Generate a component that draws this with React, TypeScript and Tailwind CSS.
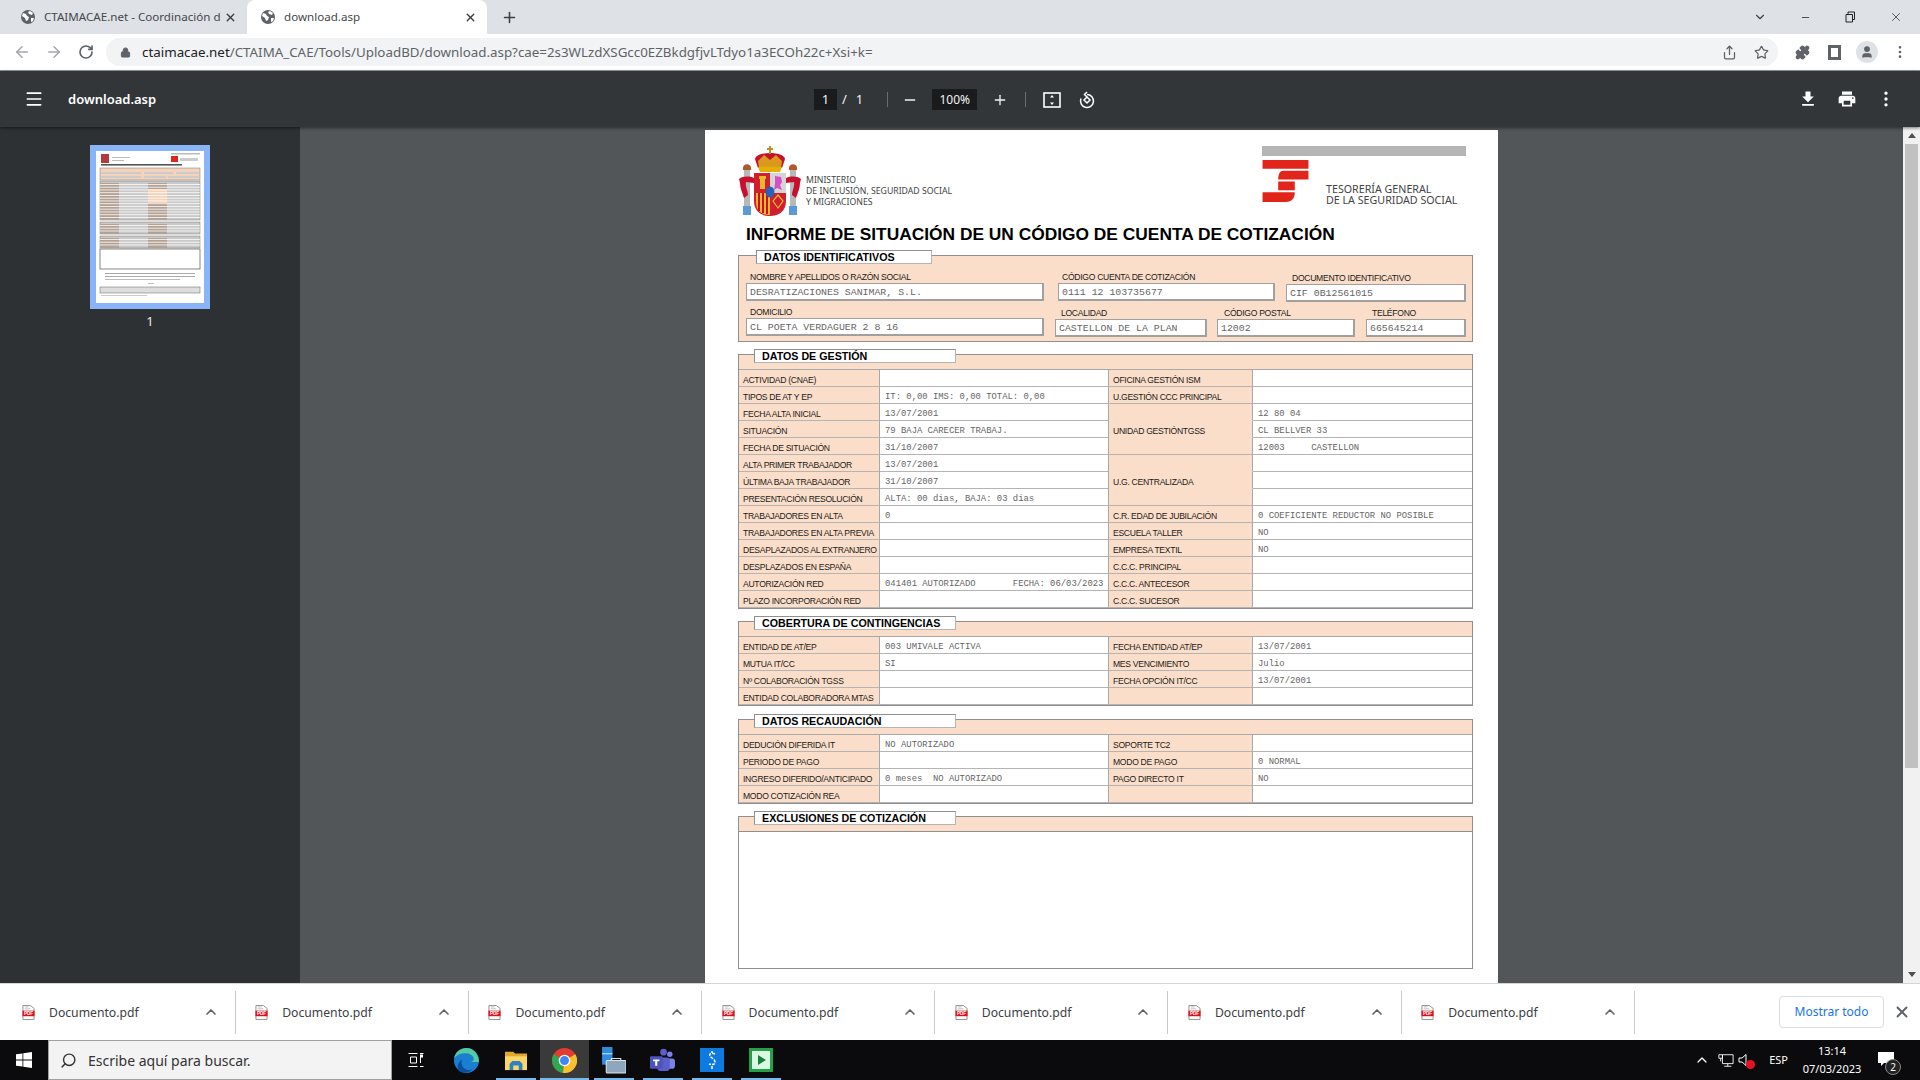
import {
  ArrowLeft,
  ArrowRight,
  ChevronDown,
  ChevronUp,
  Lock,
  Menu,
  Minus,
  MoreVertical,
  Plus,
  Puzzle,
  RotateCw,
  Search,
  Share,
  Star,
  User,
  X,
} from "lucide-react";

const UI_FONT = "font-['Noto_Sans',sans-serif]";

const gestion = [
  ["ACTIVIDAD (CNAE)", "", "OFICINA GESTIÓN ISM", ""],
  ["TIPOS DE AT Y EP", "IT: 0,00 IMS: 0,00 TOTAL: 0,00", "U.GESTIÓN CCC PRINCIPAL", ""],
  ["FECHA ALTA INICIAL", "13/07/2001", "", "12 80 04"],
  ["SITUACIÓN", "79 BAJA CARECER TRABAJ.", "UNIDAD GESTIÓNTGSS", "CL BELLVER 33"],
  ["FECHA DE SITUACIÓN", "31/10/2007", "", "12003     CASTELLON"],
  ["ALTA PRIMER TRABAJADOR", "13/07/2001", "", ""],
  ["ÚLTIMA BAJA TRABAJADOR", "31/10/2007", "U.G. CENTRALIZADA", ""],
  ["PRESENTACIÓN RESOLUCIÓN", "ALTA: 00 dias, BAJA: 03 dias", "", ""],
  ["TRABAJADORES EN ALTA", "0", "C.R. EDAD DE JUBILACIÓN", "0 COEFICIENTE REDUCTOR NO POSIBLE"],
  ["TRABAJADORES EN ALTA PREVIA", "", "ESCUELA TALLER", "NO"],
  ["DESAPLAZADOS AL EXTRANJERO", "", "EMPRESA TEXTIL", "NO"],
  ["DESPLAZADOS EN ESPAÑA", "", "C.C.C. PRINCIPAL", ""],
  ["AUTORIZACIÓN RED", "041401 AUTORIZADO       FECHA: 06/03/2023", "C.C.C. ANTECESOR", ""],
  ["PLAZO INCORPORACIÓN RED", "", "C.C.C. SUCESOR", ""],
];

const cobertura = [
  ["ENTIDAD DE AT/EP", "003 UMIVALE ACTIVA", "FECHA ENTIDAD AT/EP", "13/07/2001"],
  ["MUTUA IT/CC", "SI", "MES VENCIMIENTO", "Julio"],
  ["Nº COLABORACIÓN TGSS", "", "FECHA OPCIÓN IT/CC", "13/07/2001"],
  ["ENTIDAD COLABORADORA MTAS", "", "", ""],
];

const recaudacion = [
  ["DEDUCIÓN DIFERIDA IT", "NO AUTORIZADO", "SOPORTE TC2", ""],
  ["PERIODO DE PAGO", "", "MODO DE PAGO", "0 NORMAL"],
  ["INGRESO DIFERIDO/ANTICIPADO", "0 meses  NO AUTORIZADO", "PAGO DIRECTO IT", "NO"],
  ["MODO COTIZACIÓN REA", "", "", ""],
];

function GlobeIcon() {
  return (
    <svg viewBox="0 0 16 16" className="w-4 h-4 shrink-0">
      <circle cx="8" cy="8" r="7" fill="#5f6368" />
      <path d="M3 4l3 1 1 2 2 1-1 3-2 1-1-3-3-2zM10 2l3 2-1 2-3-1-1-2zM11 9l3 0-1 3-2 1z" fill="#fff" />
    </svg>
  );
}

function Tab({ title, active }: { title: string; active?: boolean }) {
  return (
    <div className={`h-[34px] w-[240px] shrink-0 flex items-center pl-[13px] pr-[10px] ${active ? "bg-white rounded-t-lg" : ""}`}>
      <GlobeIcon />
      <span className="ml-[8px] flex-1 text-[11.6px] text-[#45474a] whitespace-nowrap">{title}</span>
      <X className="w-[13px] h-[13px] text-[#3c4043]" strokeWidth={2.5} />
    </div>
  );
}

function Legend({ title, wide }: { title: string; wide?: boolean }) {
  return (
    <div
      className={`absolute top-[-6px] h-[14px] bg-white border border-[#8f8f8f] border-b-[#b5b5b5] border-r-[#b5b5b5] text-[10.7px] leading-[12px] font-bold text-black ${
        wide ? "left-[15px] w-[202px] pl-[7px]" : "left-[17px] w-[176px] pl-[7px]"
      }`}
    >
      {title}
    </div>
  );
}

function Field({ label, value, className, labelClass }: { label: string; value: string; className: string; labelClass: string }) {
  return (
    <div className={className}>
      <div className={`text-[8.6px] tracking-[-0.3px] leading-[10px] h-[10px] text-[#1a1a1a] ${labelClass}`}>{label}</div>
      <div className="mt-[1px] h-[18px] bg-white border border-[#a0a0a0] border-r-2 border-b-2 pl-[3px] font-['Liberation_Mono',monospace] text-[9.9px] leading-[17px] text-[#666] whitespace-pre">
        {value}
      </div>
    </div>
  );
}

function DataTable({ rows, merged }: { rows: string[][]; merged?: boolean }) {
  const cell = "h-[17px] border-b border-[#b4b4b4] pt-[3px] leading-[14px] whitespace-pre overflow-hidden";
  const label = `${cell} text-[8.6px] tracking-[-0.3px] bg-[#fadec9] pl-[4px] text-[#1a1a1a] border-r border-r-[#a8a8a8]`;
  const value = `${cell} text-[8.9px] bg-white pl-[5px] font-['Liberation_Mono',monospace] text-[#666]`;
  return (
    <div className="grid grid-cols-[141px_229px_144px_1fr] border-t border-[#a8a8a8]">
      {rows.flatMap((r, i) => {
        const noBorder = merged && [2, 3, 5, 6].includes(i);
        return [
          <div key={i + "a"} className={label}>{r[0]}</div>,
          <div key={i + "b"} className={`${value} border-r border-r-[#a8a8a8]`}>{r[1]}</div>,
          <div key={i + "c"} className={`${label} ${noBorder ? "border-b-[#fadec9]" : ""}`}>{r[2]}</div>,
          <div key={i + "d"} className={value}>{r[3]}</div>,
        ];
      })}
    </div>
  );
}

function Section({ title, wide, children, className }: { title: string; wide?: boolean; children: React.ReactNode; className?: string }) {
  return (
    <div className={`relative border border-[#8f8f8f] ${className ?? ""}`}>
      <Legend title={title} wide={wide} />
      <div className="h-[14px] bg-[#fadec9]" />
      {children}
    </div>
  );
}

function CoatOfArms() {
  return (
    <svg viewBox="0 0 64 70" className="w-[64px] h-[70px] shrink-0">
      <rect x="6" y="24" width="6" height="38" fill="#b8b8b8" />
      <rect x="52" y="24" width="6" height="38" fill="#b8b8b8" />
      <path d="M5 22c0-5 8-5 8 0v2H5zM51 22c0-5 8-5 8 0v2h-8z" fill="#b5552a" />
      <rect x="5" y="60" width="8" height="9" fill="#5b9bd5" />
      <rect x="51" y="60" width="8" height="9" fill="#5b9bd5" />
      <path d="M1 33c4-3 10-3 15-1v5l-8-1c-1 4 2 9 2 13l-4 3c-2-6-4-10-4-15z" fill="#c8102e" />
      <path d="M63 33c-4-3-10-3-15-1v5l8-1c1 4-2 9-2 13l4 3c2-6 4-10 4-15z" fill="#c8102e" />
      <path d="M17 13c1-8 29-8 30 0l-3 9H20z" fill="#c8102e" />
      <path d="M20 15l6-6 6 5 6-5 6 6-1 7H21z" fill="#d99a1c" />
      <path d="M20 21h24l-2 5H22z" fill="#e2b007" />
      <rect x="31" y="0" width="2" height="8" fill="#b9931f" />
      <rect x="29" y="2" width="6" height="2" fill="#b9931f" />
      <path d="M16 27h16v43c-9 0-16-5-16-15z" fill="#d21f2f" />
      <path d="M32 27h16v20H32z" fill="#d4d4d4" />
      <path d="M32 47h16v8c0 10-7 15-16 15z" fill="#d21f2f" />
      <path d="M18 47h14v22c-8 0-14-4-14-13z" fill="#e8b92e" />
      <path d="M20 47h2v18h-2zM24 47h2v20h-2zM28 47h2v21h-2z" fill="#c8102e" />
      <path d="M21 30h7v3h-1v10h-5V33h-1z" fill="#e8b92e" />
      <path d="M37 30l6 1 1 5-2 3 2 5-5-2-3 2 1-6z" fill="#d64fc4" />
      <path d="M40 49l5 6-5 7-5-7z" fill="none" stroke="#e8b92e" strokeWidth="1.2" />
      <ellipse cx="32" cy="46" rx="4.5" ry="5.5" fill="#2a62b8" />
    </svg>
  );
}

function TgssLogo() {
  return (
    <svg viewBox="0 0 47 43" className="w-[47px] h-[42px] shrink-0" fill="#e1251b">
      <path d="M0 0h47v9H0z" />
      <path d="M47 11H21c-3 0-5 3-5 9h31z" />
      <path d="M16 22h17v9H16z" />
      <path d="M0 33h33c0 6-3 10-9 10H0z" />
    </svg>
  );
}

function ThumbRows({ y, count }: { y: number; count: number }) {
  return (
    <>
      {Array.from({ length: count }).map((_, r) => (
        <rect key={r} x="4" y={y + r * 2.75} width="100" height="0.9" fill="#fff" opacity="0.85" />
      ))}
    </>
  );
}

function Thumbnail() {
  return (
    <svg viewBox="0 0 108 152" className="block w-[108px] h-[152px] bg-white blur-[0.3px]">
      <rect x="5" y="3" width="8" height="9" fill="#b33a3a" />
      <rect x="16" y="6" width="18" height="1" fill="#bbb" />
      <rect x="16" y="9" width="12" height="1" fill="#bbb" />
      <rect x="75" y="2" width="29" height="1.5" fill="#bbb" />
      <rect x="75" y="5" width="7" height="6" fill="#e1251b" />
      <rect x="84" y="7" width="18" height="3" fill="#ccc" />
      <rect x="5" y="13" width="81" height="1.6" fill="#555" />
      <rect x="4" y="17" width="100" height="12" fill="#f4d3ba" stroke="#777" strokeWidth="0.5" />
      <rect x="5" y="21" width="40" height="2" fill="#ccc" />
      <rect x="48" y="21" width="29" height="2" fill="#ccc" />
      <rect x="80" y="21" width="23" height="2" fill="#ccc" />
      <rect x="5" y="25" width="40" height="2" fill="#ccc" />
      <rect x="48" y="25" width="22" height="2" fill="#ccc" />
      <rect x="72" y="25" width="31" height="2" fill="#ccc" />
      <rect x="4" y="30" width="100" height="39" fill="#c9c9c9" stroke="#777" strokeWidth="0.5" />
      <rect x="4" y="32" width="19" height="37" fill="#b3a294" />
      <rect x="52" y="32" width="19" height="37" fill="#b3a294" />
      <rect x="52" y="38" width="19" height="14" fill="#f4d3ba" />
      <ThumbRows y={33} count={13} />
      <rect x="4" y="71" width="100" height="12" fill="#c9c9c9" stroke="#777" strokeWidth="0.5" />
      <rect x="4" y="73" width="19" height="10" fill="#b3a294" />
      <rect x="52" y="73" width="19" height="10" fill="#b3a294" />
      <ThumbRows y={74} count={3} />
      <rect x="4" y="85" width="100" height="12" fill="#c9c9c9" stroke="#777" strokeWidth="0.5" />
      <rect x="4" y="87" width="19" height="10" fill="#b3a294" />
      <rect x="52" y="87" width="19" height="10" fill="#b3a294" />
      <ThumbRows y={88} count={3} />
      <rect x="4" y="98" width="100" height="20" fill="#fff" stroke="#666" strokeWidth="0.8" />
      <rect x="9" y="122" width="90" height="1" fill="#aaa" />
      <rect x="9" y="125" width="90" height="1" fill="#aaa" />
      <rect x="9" y="128" width="75" height="1" fill="#bbb" />
      <rect x="52" y="132" width="6" height="0.8" fill="#aaa" />
      <rect x="4" y="136" width="100" height="6" fill="#ddd" stroke="#666" strokeWidth="0.5" />
      <rect x="5" y="144" width="46" height="1" fill="#ccc" />
    </svg>
  );
}

function PdfIcon() {
  return (
    <svg viewBox="0 0 14 16" className="w-[13px] h-[15px] shrink-0">
      <path d="M1 .5h8l4 3v12H1z" fill="#fff" stroke="#8a8a8a" />
      <rect x="0.5" y="6" width="13" height="6" fill="#e0101a" />
      <path d="M3 2h4M3 4h6" stroke="#aaa" strokeWidth="0.8" />
      <text x="7" y="11" textAnchor="middle" fontSize="5" fontWeight="700" fill="#fff" fontFamily="Liberation Sans, sans-serif">PDF</text>
    </svg>
  );
}

function DownloadItem() {
  return (
    <div className="w-[233.2px] h-[43px] shrink-0 flex items-center pl-[19.5px] pr-[16px] border-r border-[#c9c9c9]">
      <PdfIcon />
      <span className="ml-[14px] pt-[2px] flex-1 text-[12.2px] text-[#3c4043]">Documento.pdf</span>
      <ChevronUp className="w-[16px] h-[16px] text-[#5f6368]" strokeWidth={2.5} />
    </div>
  );
}

function TaskIcon({ children, active, open = true }: { children: React.ReactNode; active?: boolean; open?: boolean }) {
  return (
    <div className={`w-[49px] h-[40px] flex items-center justify-center relative ${active ? "bg-[#3a3a3a]" : ""}`}>
      {children}
      {open && <div className={`absolute bottom-0 h-[2px] bg-[#76b9ed] ${active ? "left-0 right-0" : "left-[5px] right-[4px]"}`} />}
    </div>
  );
}

export default function App() {
  return (
    <div className={`w-[1920px] h-[1080px] overflow-hidden flex flex-col ${UI_FONT}`}>
      {/* tabs */}
      <div className="h-[34px] bg-[#dee1e6] flex items-center pl-[7px] shrink-0">
        <Tab title="CTAIMACAE.net - Coordinación d" />
        <Tab title="download.asp" active />
        <Plus className="ml-[14px] w-[17px] h-[17px] text-[#3c4043]" strokeWidth={2.2} />
        <div className="ml-auto flex items-center gap-[33px] pr-[17px] text-[#3c4043]">
          <ChevronDown className="w-[14px] h-[14px]" />
          <Minus className="w-[11px] h-[11px]" />
          <svg viewBox="0 0 12 12" className="w-[12px] h-[12px]" fill="none" stroke="#222" strokeWidth="1">
            <path d="M2 3.5h6.5V11H2zM4 3.5V1h6.5v7.5H8.5" />
          </svg>
          <X className="w-[14px] h-[14px]" strokeWidth={1.4} />
        </div>
      </div>
      {/* omnibox */}
      <div className="h-[37px] bg-white flex items-center shrink-0 border-b border-[#9a9a9a]">
        <ArrowLeft className="ml-[13px] w-[18px] h-[18px] text-[#a4a7ab]" />
        <ArrowRight className="ml-[14px] w-[18px] h-[18px] text-[#a4a7ab]" />
        <RotateCw className="ml-[15px] w-[16px] h-[16px] text-[#5f6368]" strokeWidth={2.5} />
        <div className="ml-[12px] w-[1672px] h-[28px] rounded-full bg-[#f1f3f4] flex items-center pl-[14px] pr-[9px]">
          <Lock className="w-[11px] h-[11px] text-[#5f6368]" fill="#5f6368" />
          <span className="ml-[11px] text-[13.35px] text-[#5f6368] whitespace-nowrap">
            <span className="text-[#202124]">ctaimacae.net</span>/CTAIMA_CAE/Tools/UploadBD/download.asp?cae=2s3WLzdXSGcc0EZBkdgfjvLTdyo1a3ECOh22c+Xsi+k=
          </span>
          <Share className="ml-auto w-[15px] h-[15px] text-[#5f6368]" />
          <Star className="ml-[17px] w-[15px] h-[15px] text-[#5f6368]" />
        </div>
        <Puzzle className="ml-[17px] w-[15px] h-[15px] text-[#5f6368]" fill="#5f6368" />
        <div className="ml-[18px] w-[13px] h-[15px] border-[3px] border-[#5f6368] border-l-[3px]" />
        <div className="ml-[15px] w-[22px] h-[22px] rounded-full bg-[#dee1e6] flex items-center justify-center">
          <User className="w-[14px] h-[14px] text-[#5f6368]" fill="#5f6368" />
        </div>
        <MoreVertical className="ml-[14px] w-[16px] h-[16px] text-[#5f6368]" />
      </div>
      {/* pdf toolbar */}
      <div className="h-[56px] bg-[#323639] flex items-center shrink-0 relative z-10 text-white shadow-[0_1px_3px_rgba(0,0,0,0.5)]">
        <Menu className="ml-[24px] w-[20px] h-[20px]" />
        <span className="ml-[24px] pt-[1px] text-[13px] font-semibold">download.asp</span>
        <div className="absolute left-[814px] top-[18px] flex items-center text-[13px] text-[#f1f3f4]">
          <span className="w-[23px] h-[21px] bg-[#191b1c] flex items-center justify-center">1</span>
          <span className="ml-[5px]">/</span>
          <span className="ml-[9px]">1</span>
          <div className="ml-[24px] w-px h-[15px] bg-[#6b6e71]" />
          <Minus className="ml-[14px] w-[16px] h-[16px]" />
          <span className="ml-[14px] w-[45px] h-[21px] bg-[#191b1c] flex items-center justify-center text-[12px]">100%</span>
          <Plus className="ml-[15px] w-[16px] h-[16px]" />
          <div className="ml-[17px] w-px h-[15px] bg-[#6b6e71]" />
          <svg viewBox="0 0 18 16" className="ml-[17px] w-[18px] h-[16px]" fill="none" stroke="#fff" strokeWidth="1.6">
            <rect x="1" y="1" width="16" height="14" />
            <path d="M9 3l2 2.5H7zM9 13l2-2.5H7z" fill="#fff" stroke="none" />
          </svg>
          <svg viewBox="0 0 18 18" className="ml-[17px] w-[18px] h-[18px]" fill="none" stroke="#fff" strokeWidth="1.5">
            <path d="M9 3.5a6.5 6.5 0 1 1-6 4" />
            <path d="M9 1L6.5 3.5 9 6" />
            <path d="M9 6l3 3-3 3-3-3z" />
          </svg>
        </div>
        <div className="ml-auto flex items-center gap-[19px] pr-[24px]">
          <svg viewBox="0 0 24 24" className="w-[20px] h-[20px]" fill="#fff">
            <path d="M19 9h-4V3H9v6H5l7 7 7-7zM5 18v2h14v-2H5z" />
          </svg>
          <svg viewBox="0 0 24 24" className="w-[20px] h-[20px]" fill="#fff">
            <path d="M19 8H5c-1.66 0-3 1.34-3 3v6h4v4h12v-4h4v-6c0-1.66-1.34-3-3-3zm-3 11H8v-5h8v5zm3-7c-.55 0-1-.45-1-1s.45-1 1-1 1 .45 1 1-.45 1-1 1zm-1-9H6v4h12V3z" />
          </svg>
          <MoreVertical className="w-[20px] h-[20px]" />
        </div>
      </div>
      {/* viewer */}
      <div className="flex-1 min-h-0 flex">
        <div className="w-[300px] bg-[#2d3134] shrink-0 flex flex-col items-center pt-[18px]">
          <div className="border-[6px] border-[#8ab4f8]">
            <Thumbnail />
          </div>
          <div className="mt-[3px] text-[13px] text-[#e8eaed]">1</div>
        </div>
        <div className="flex-1 bg-[#525659] flex justify-center pt-[3px] overflow-hidden">
          <div className="w-[793px] h-[900px] shrink-0 bg-white pl-[33px] pr-[25px] font-['Liberation_Sans',Arial,sans-serif]">
            {/* header */}
            <div className="h-[88px] flex relative">
              <div className="pt-[16px] flex">
                <CoatOfArms />
                <div className="ml-[4px] mt-[29px] text-[8.7px] leading-[11px] text-[#444] font-['Noto_Sans',sans-serif] whitespace-nowrap">
                  <div>MINISTERIO</div>
                  <div>DE INCLUSIÓN, SEGURIDAD SOCIAL</div>
                  <div>Y MIGRACIONES</div>
                </div>
              </div>
              <div className="ml-auto mr-[7px] pt-[16px] w-[204px]">
                <div className="h-[10px] bg-[#b5b5b5]" />
                <div className="mt-[4px] flex">
                  <TgssLogo />
                  <div className="ml-[17px] mt-[24px] text-[10.7px] leading-[11px] text-[#444] whitespace-nowrap font-['Noto_Sans',sans-serif]">
                    <div>TESORERÍA GENERAL</div>
                    <div>DE LA SEGURIDAD SOCIAL</div>
                  </div>
                </div>
              </div>
            </div>
            <h1 className="ml-[8px] h-[32px] text-[17.35px] leading-[32px] font-bold text-black whitespace-nowrap">
              INFORME DE SITUACIÓN DE UN CÓDIGO DE CUENTA DE COTIZACIÓN
            </h1>
            {/* identificativos */}
            <div className="relative mt-[5px] h-[87px] border border-[#8f8f8f] bg-[#fadec9] pl-[7px] pr-[6px]">
              <Legend title="DATOS IDENTIFICATIVOS" />
              <div className="pt-[16px] flex">
                <Field className="w-[298px]" labelClass="pl-[4px]" label="NOMBRE Y APELLIDOS O RAZÓN SOCIAL" value="DESRATIZACIONES SANIMAR, S.L." />
                <Field className="ml-[14px] w-[217px]" labelClass="pl-[4px]" label="CÓDIGO CUENTA DE COTIZACIÓN" value="0111 12 103735677" />
                <Field className="ml-[11px] mt-[1px] w-[180px]" labelClass="pl-[6px]" label="DOCUMENTO IDENTIFICATIVO" value="CIF 0B12561015" />
              </div>
              <div className="pt-[5px] flex">
                <Field className="w-[298px]" labelClass="pl-[4px]" label="DOMICILIO" value="CL POETA VERDAGUER 2 8 16" />
                <Field className="ml-[11px] mt-[1px] w-[152px]" labelClass="pl-[6px]" label="LOCALIDAD" value="CASTELLON DE LA PLAN" />
                <Field className="ml-[10px] mt-[1px] w-[138px]" labelClass="pl-[7px]" label="CÓDIGO POSTAL" value="12002" />
                <Field className="ml-[11px] mt-[1px] w-[100px]" labelClass="pl-[6px]" label="TELÉFONO" value="665645214" />
              </div>
            </div>
            <Section title="DATOS DE GESTIÓN" wide className="mt-[12px]">
              <DataTable rows={gestion} merged />
            </Section>
            <Section title="COBERTURA DE CONTINGENCIAS" wide className="mt-[12px]">
              <DataTable rows={cobertura} />
            </Section>
            <Section title="DATOS RECAUDACIÓN" wide className="mt-[13px]">
              <DataTable rows={recaudacion} />
            </Section>
            <Section title="EXCLUSIONES DE COTIZACIÓN" wide className="mt-[12px]">
              <div className="h-[137px] border-t border-[#8f8f8f]" />
            </Section>
          </div>
        </div>
        <div className="w-[17px] shrink-0 bg-[#f1f1f1] flex flex-col items-center">
          <div className="h-[17px] w-full flex items-center justify-center">
            <div className="w-0 h-0 border-x-[4px] border-x-transparent border-b-[5px] border-b-[#505050]" />
          </div>
          <div className="w-[13px] h-[624px] bg-[#c1c1c1]" />
          <div className="mt-auto h-[17px] w-full flex items-center justify-center">
            <div className="w-0 h-0 border-x-[4px] border-x-transparent border-t-[5px] border-t-[#505050]" />
          </div>
        </div>
      </div>
      {/* downloads */}
      <div className="h-[57px] bg-white border-t border-[#d5d5d5] shrink-0 flex items-center pl-[2.5px]">
        {Array.from({ length: 7 }).map((_, i) => (
          <DownloadItem key={i} />
        ))}
        <div className="ml-auto w-[105px] h-[32px] border border-[#dadce0] rounded flex items-center justify-center text-[12px] text-[#1a73e8]">
          Mostrar todo
        </div>
        <X className="ml-[9px] mr-[9px] w-[18px] h-[18px] text-[#5f6368]" strokeWidth={2.5} />
      </div>
      {/* taskbar */}
      <div className="h-[40px] bg-[#0b0b0d] shrink-0 flex items-center text-white">
        <div className="w-[48px] flex justify-center">
          <svg viewBox="0 0 16 16" className="w-[16px] h-[16px]" fill="#fff">
            <path d="M0 2.3l6.5-.9v6.2H0zM7.3 1.3L16 0v7.6H7.3zM0 8.4h6.5v6.2L0 13.7zM7.3 8.4H16V16l-8.7-1.3z" />
          </svg>
        </div>
        <div className="w-[344px] h-[40px] bg-[#f3f3f3] border border-[#a0a0a0] flex items-center pl-[11px] text-[#333]">
          <Search className="w-[17px] h-[17px] -scale-x-100" />
          <span className="ml-[11px] text-[14px]">Escribe aquí para buscar.</span>
        </div>
        <div className="ml-[13px] w-[22px] flex justify-center">
          <svg viewBox="0 0 16 16" className="w-[16px] h-[16px]" fill="none" stroke="#fff">
            <path d="M.5 1.5h9M.5 14.5h9M2.5 5v6h6V5zM12 1.5h3.5M12.5 5v6M12 14.5h3.5" />
            <rect x="12" y="2.5" width="3" height="3" fill="#fff" stroke="none" />
          </svg>
        </div>
        <div className="ml-[15px] flex">
          <TaskIcon open={false}>
            <svg viewBox="0 0 24 24" className="w-[25px] h-[25px]">
              <circle cx="12" cy="12" r="12" fill="#1b7fd0" />
              <path d="M24 13.5C24 6 18.5 0 12 0 6 0 1 4 0 10c3-4 7-5 11-5 5 0 8 3 8 5.5 0 2-1.5 3-5 3z" fill="#53c9a4" />
              <path d="M13 21c-5-1-7-6-5-10-5 3-6 9-2 12 5 2 10 0 13-4-2 2-4 2.500-6 2z" fill="#0a4f9e" />
            </svg>
          </TaskIcon>
          <TaskIcon>
            <svg viewBox="0 0 24 24" className="w-[22px] h-[22px]">
              <path d="M0 3h9l2 2h13v18H0z" fill="#e0a92e" />
              <rect x="0" y="8" width="24" height="15" fill="#fbd765" />
              <path d="M5 23v-7l3-3h8l3 3v7h-4v-5H9v5z" fill="#2f80c8" />
            </svg>
          </TaskIcon>
          <TaskIcon active>
            <svg viewBox="0 0 24 24" className="w-[25px] h-[25px]">
              <circle cx="12" cy="12" r="12" fill="#e33b2e" />
              <path d="M12 12L1.6 6A12 12 0 0 0 10.500 23.900z" fill="#2fa84f" />
              <path d="M12 12l10.400-6A12 12 0 0 1 10.500 23.900z" fill="#fbc02d" />
              <circle cx="12" cy="12" r="5.6" fill="#fff" />
              <circle cx="12" cy="12" r="4.300" fill="#4285f4" />
            </svg>
          </TaskIcon>
          <TaskIcon>
            <svg viewBox="0 0 24 26" className="w-[25px] h-[27px]">
              <rect x="1" y="0" width="10" height="17" fill="#2f8de0" />
              <rect x="1" y="6" width="10" height="1" fill="#cfe6fa" />
              <rect x="5" y="13" width="19" height="12" rx="1" fill="#8ea7bd" stroke="#dfe7ee" />
              <path d="M10 13v-2h9v2" fill="none" stroke="#dfe7ee" />
            </svg>
          </TaskIcon>
          <TaskIcon>
            <svg viewBox="0 0 24 24" className="w-[25px] h-[25px]">
              <circle cx="19" cy="6" r="2.600" fill="#7b83eb" />
              <circle cx="13" cy="4" r="3.200" fill="#5b5fc7" />
              <rect x="16" y="10" width="8" height="10" rx="3" fill="#7b83eb" />
              <rect x="7" y="9" width="12" height="13" rx="3" fill="#5b5fc7" />
              <rect x="0" y="8" width="12" height="12" rx="1" fill="#4b53bc" />
              <path d="M3 11h6v1.600H7V17H5v-4.400H3z" fill="#fff" />
            </svg>
          </TaskIcon>
          <TaskIcon>
            <svg viewBox="0 0 24 24" className="w-[24px] h-[24px]">
              <rect x="0" y="0" width="24" height="24" fill="#0c7ae0" />
              <path d="M15 6c-4-2-6 0-5 2s5 3 5 6-3 3-6 2M12 3v2M12 18v3" stroke="#fff" strokeWidth="1.500" fill="none" strokeDasharray="3 1.200" />
            </svg>
          </TaskIcon>
          <TaskIcon>
            <svg viewBox="0 0 24 24" className="w-[24px] h-[24px]">
              <rect x="0" y="0" width="24" height="24" fill="#24a148" />
              <rect x="3" y="3" width="18" height="18" fill="#d9f7e2" />
              <path d="M9 7l8 5-8 5z" fill="#17803a" />
            </svg>
          </TaskIcon>
        </div>
        <div className="ml-auto flex items-center">
          <ChevronUp className="w-[16px] h-[16px]" />
          <svg viewBox="0 0 18 16" className="ml-[8px] w-[16px] h-[15px]" fill="none" stroke="#fff">
            <path d="M5 1.500h12v10H5zM7 14.500h8M11 11.500v3M1 1.500h4v4H1zM3 5.500V9" />
          </svg>
          <div className="ml-[4px] relative w-[16px] h-[14px]">
            <svg viewBox="0 0 14 14" className="w-[14px] h-[14px]" fill="none" stroke="#fff">
              <path d="M1 5h3l4-3.500v11L4 9H1z" />
            </svg>
            <div className="absolute right-[-1px] bottom-[-2px] w-[9px] h-[9px] rounded-full bg-[#e81123]" />
          </div>
          <span className="ml-[15px] text-[11px]">ESP</span>
          <div className="ml-[11px] w-[66px] text-center text-[11px] leading-[18px]">
            <div>13:14</div>
            <div>07/03/2023</div>
          </div>
          <div className="ml-[13px] mr-[25px] relative w-[17px] h-[18px]">
            <svg viewBox="0 0 16 16" className="w-[16px] h-[16px]" fill="#fff">
              <path d="M0 1h16v11H6l-3 3v-3H0z" />
            </svg>
            <div className="absolute left-[7px] top-[8px] w-[16px] h-[16px] rounded-full bg-[#222] border border-[#888] text-[10px] leading-[14px] text-center">2</div>
          </div>
        </div>
      </div>
    </div>
  );
}
